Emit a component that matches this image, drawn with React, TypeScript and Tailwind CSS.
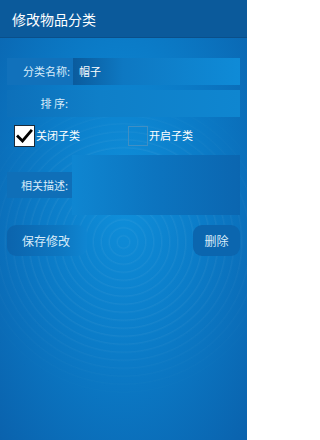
export default function App() {
  const font = { fontFamily: '"Noto Sans CJK SC", "Noto Sans", sans-serif' };
  return (
    <div
      style={font}
      className="relative w-[247px] h-[440px] overflow-hidden text-white bg-[radial-gradient(ellipse_at_50%_45%,#0f8fda_0%,#0b7cc8_45%,#0a62ad_100%)]"
    >
      <div className="pointer-events-none absolute inset-0 bg-[repeating-radial-gradient(circle_at_50%_55%,rgba(255,255,255,0)_0px,rgba(255,255,255,0)_5px,rgba(255,255,255,0.05)_6px,rgba(255,255,255,0)_8px)] [mask-image:radial-gradient(circle_at_50%_55%,black_0%,black_35%,transparent_60%)]" />
      <div className="relative h-[38px] flex items-center px-[12px] bg-[#0b5a9b] border-b border-[#0a4f8a]">
        <span className="text-[14px] leading-none">修改物品分类</span>
      </div>

      <div className="relative flex flex-col px-[7px] pt-[20px]">
        <div className="flex h-[27px] w-[233px]">
          <div className="w-[66px] flex items-center justify-end pr-[3px] bg-[#1171bb] text-[11px] text-[#d8ecfa]">分类名称:</div>
          <div className="flex-1 flex items-center pl-[6px] bg-[linear-gradient(to_right,#0a5b9d,#0e78c2_30%,#0f8bd7)] text-[11px]">帽子</div>
        </div>

        <div className="mt-[5px] flex h-[27px] w-[233px] bg-[linear-gradient(to_right,#0d70ba,#0f7fc8_40%,#0f86d0)]">
          <div className="w-[66px] flex items-center justify-end pr-[5px] text-[11px] text-[#d8ecfa]">排 序:</div>
        </div>

        <div className="mt-[7px] flex items-center h-[23px]">
          <div className="ml-[7px] w-[21px] h-[22px] bg-white border border-[#1b2b3a] flex items-center justify-center">
            <svg width="17" height="14" viewBox="0 0 17 14">
              <path d="M2 7.5 L6.5 12 L15 2" fill="none" stroke="#000" strokeWidth="2.8" strokeLinecap="square" />
            </svg>
          </div>
          <span className="ml-[1px] text-[11px]">关闭子类</span>
          <div className="ml-[48px] w-[20px] h-[20px] border border-[#3f8fc4]" />
          <span className="ml-[1px] text-[11px]">开启子类</span>
        </div>

        <div className="mt-[8px] relative h-[60px] w-[233px]">
          <div className="absolute left-[65px] top-0 right-0 bottom-0 bg-[linear-gradient(to_right,#0f86d1,#0c74bf_50%,#0b66b0)]" />
          <div className="absolute left-0 top-[17px] w-[65px] h-[26px] flex items-center pl-[14px] bg-[#0f6fb8] text-[11px] text-[#d8ecfa]">相关描述:</div>
        </div>

        <div className="mt-[10px] flex justify-between h-[31px] w-[233px]">
          <div className="w-[80px] rounded-[9px] flex items-center pl-[15px] bg-[linear-gradient(to_right,#0b64ad,#0d78c2_70%,#0f86d2)] text-[12px] text-[#d8ecfa]">保存修改</div>
          <div className="w-[47px] rounded-[9px] flex items-center justify-center bg-[#0b66af] text-[12px] text-[#d8ecfa]">删除</div>
        </div>
      </div>
    </div>
  );
}
